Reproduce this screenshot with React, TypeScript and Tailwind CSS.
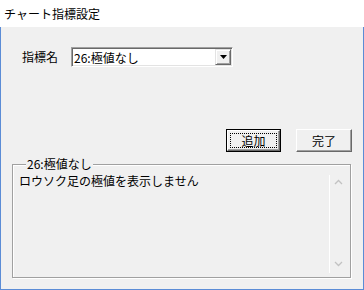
import React from "react";

function Chevron({ up }: { up?: boolean }) {
  return (
    <svg width="9" height="6" viewBox="0 0 9 6" className="text-[#c2c2c2]">
      <path
        d={up ? "M1 5 L4.5 1.5 L8 5" : "M1 1 L4.5 4.5 L8 1"}
        fill="none"
        stroke="currentColor"
        strokeWidth="1.3"
      />
    </svg>
  );
}

export default function App() {
  return (
    <div className="w-[364px] h-[290px] flex flex-col text-[12px] text-black font-['Noto_Sans_CJK_JP',sans-serif]">
      {/* title bar */}
      <div className="h-[27px] bg-white pl-[4px] flex items-center leading-none">チャート指標設定</div>

      <div className="flex-1 flex flex-col bg-[#f0f0f0] border-x border-b border-[#5b8cd6]">
        <div className="mt-[20px] ml-[21px] flex items-center gap-[13px]">
          <span className="leading-none">指標名</span>
          <div className="w-[162px] h-[20px] flex bg-white border border-t-[#a0a0a0] border-l-[#a0a0a0] border-b-white border-r-white shadow-[inset_1px_1px_0_#696969,inset_-1px_-1px_0_#e3e3e3]">
            <span className="flex-1 pl-[2px] pt-[1px] leading-[17px]">26:極値なし</span>
            <div className="w-[16px] h-[16px] mt-[1px] mr-[1px] flex items-center justify-center bg-[#f0f0f0] border border-t-[#e3e3e3] border-l-[#e3e3e3] border-b-[#696969] border-r-[#696969] shadow-[inset_1px_1px_0_white,inset_-1px_-1px_0_#a0a0a0]">
              <svg width="7" height="4" viewBox="0 0 7 4">
                <path d="M0 0 H7 L3.5 4 Z" fill="black" />
              </svg>
            </div>
          </div>
        </div>

        <div className="mt-[62px] pr-[11px] flex justify-end gap-[15px]">
          <button className="w-[55px] h-[23px] p-0 border border-black bg-[#f0f0f0]">
            <div className="w-full h-full flex p-[2px] border border-t-white border-l-white border-b-[#696969] border-r-[#696969] shadow-[inset_-1px_-1px_0_#a0a0a0]">
              <span className="flex-1 flex items-center justify-center border border-dotted border-black leading-none">追加</span>
            </div>
          </button>
          <button className="w-[56px] h-[23px] flex items-center justify-center border border-t-white border-l-white border-b-[#696969] border-r-[#696969] bg-[#f0f0f0] shadow-[inset_-1px_-1px_0_#a0a0a0] leading-none">
            完了
          </button>
        </div>

        <fieldset className="mt-[5px] ml-[11px] mr-[12px] mb-[11px] flex-1 min-h-0 flex flex-col border border-[#a0a0a0] shadow-[1px_1px_0_white,inset_1px_1px_0_white] pl-[6px] pr-[4px] pb-[4px]">
          <legend className="ml-[7px] px-[1px] leading-[14px] bg-[#f0f0f0]">26:極値なし</legend>
          <div className="flex-1 min-h-0 flex">
            <div className="flex-1 pt-[2px] leading-[16px]">ロウソク足の極値を表示しません</div>
            <div className="w-[17px] mt-[4px] border-l border-white flex flex-col items-center justify-between pt-[4px] pb-[6px]">
              <Chevron up />
              <Chevron />
            </div>
          </div>
        </fieldset>
      </div>
    </div>
  );
}
